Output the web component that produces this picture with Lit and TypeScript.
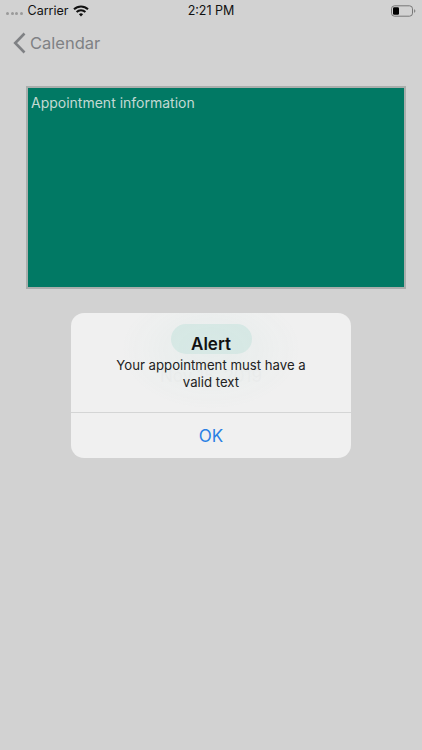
import { LitElement, html, css } from "lit";
import { customElement } from "lit/decorators.js";

@customElement("app-root")
export class AppRoot extends LitElement {
  static styles = css`
    :host {
      display: block;
      position: relative;
      width: 422px;
      height: 750px;
      overflow: hidden;
      background: #d2d2d2;
      font-family: Inter, "Liberation Sans", sans-serif;
      color: #111;
    }
    .status {
      height: 21px;
      display: grid;
      grid-template-columns: 1fr auto 1fr;
      align-items: center;
      font-size: 12.5px;
      padding: 0 6px;
    }
    .left { display: flex; align-items: center; gap: 5px; }
    .dots { display: flex; gap: 1.5px; margin-top: 5px; }
    .dots i { width: 3px; height: 3px; border-radius: 50%; background: #9a9a9a; }
    .right { display: flex; justify-content: flex-end; }
    .battery { margin-right: -1px; }
    .nav {
      height: 44px;
      display: flex;
      align-items: center;
      gap: 4px;
      padding-left: 13px;
      color: #7f8184;
      font-size: 16.5px;
    }
    .box {
      box-sizing: border-box;
      margin: 21px 16px 0 26px;
      height: 203px;
      background: #017964;
      border: 2px solid #a9aeac;
      color: #c3d9d3;
      font-size: 14px;
      padding: 6px 3px;
    }
    .under {
      display: flex;
      flex-direction: column;
      align-items: center;
      margin-top: 35px;
    }
    .pill {
      width: 81px;
      height: 30px;
      border-radius: 15px;
      background: #0a9478;
    }
    .date { margin-top: 12px; font-size: 17px; color: #b4b4b4; }
    .alert {
      position: absolute;
      left: 71px;
      top: 313px;
      width: 280px;
      height: 145px;
      border-radius: 13px;
      display: flex;
      flex-direction: column;
      background: radial-gradient(ellipse 90px 60px at 50% 25%, rgba(222, 234, 232, 0.5), rgba(240, 240, 240, 0) 100%),
        rgba(245, 245, 245, 0.86);
    }
    .body {
      flex: 1;
      display: flex;
      flex-direction: column;
      align-items: center;
      text-align: center;
      padding-top: 21px;
    }
    .title { font-size: 17px; font-weight: 600; line-height: 20px; }
    .msg {
      margin-top: 3px;
      font-size: 13.2px;
      line-height: 16.5px;
      color: #222;
      width: 220px;
    }
    .ok {
      height: 45px;
      border-top: 1px solid #d4d5d5;
      display: flex;
      align-items: center;
      justify-content: center;
      font-size: 17px;
      color: #2b80e4;
    }
  `;

  render() {
    return html`
      <div class="status">
        <div class="left">
          <span class="dots"><i></i><i></i><i></i><i></i></span>
          <span>Carrier</span>
          <svg width="16" height="12" viewBox="0 0 16 12" fill="none" stroke="#111" stroke-width="2">
            <path d="M1 4.3a10 10 0 0 1 14 0" />
            <path d="M3.6 7a6.3 6.3 0 0 1 8.8 0" />
            <path d="M8 11.5 5.9 9.3a3 3 0 0 1 4.2 0z" fill="#111" stroke="none" />
          </svg>
        </div>
        <div>2:21 PM</div>
        <div class="right">
          <svg class="battery" width="26" height="12" viewBox="0 0 26 12">
            <rect x="0.5" y="0.8" width="21" height="10.4" rx="3" fill="none" stroke="#777" />
            <rect x="2" y="2.3" width="6" height="7.4" rx="1.2" fill="#000" />
            <path d="M23 4.2c1 .3 1.4 1 1.4 1.8s-.4 1.5-1.4 1.8z" fill="#888" />
          </svg>
        </div>
      </div>
      <div class="nav">
        <svg width="13" height="22" viewBox="0 0 13 22" fill="none" stroke="#7f8184" stroke-width="2.6">
          <path d="M11.5 1.5 2.2 11l9.3 9.5" />
        </svg>
        <span>Calendar</span>
      </div>
      <div class="box">Appointment information</div>
      <div class="under">
        <div class="pill"></div>
        <div class="date">Nov 15, 2019</div>
      </div>
      <div class="alert">
        <div class="body">
          <div class="title">Alert</div>
          <div class="msg">Your appointment must have a valid text</div>
        </div>
        <div class="ok">OK</div>
      </div>
    `;
  }
}
